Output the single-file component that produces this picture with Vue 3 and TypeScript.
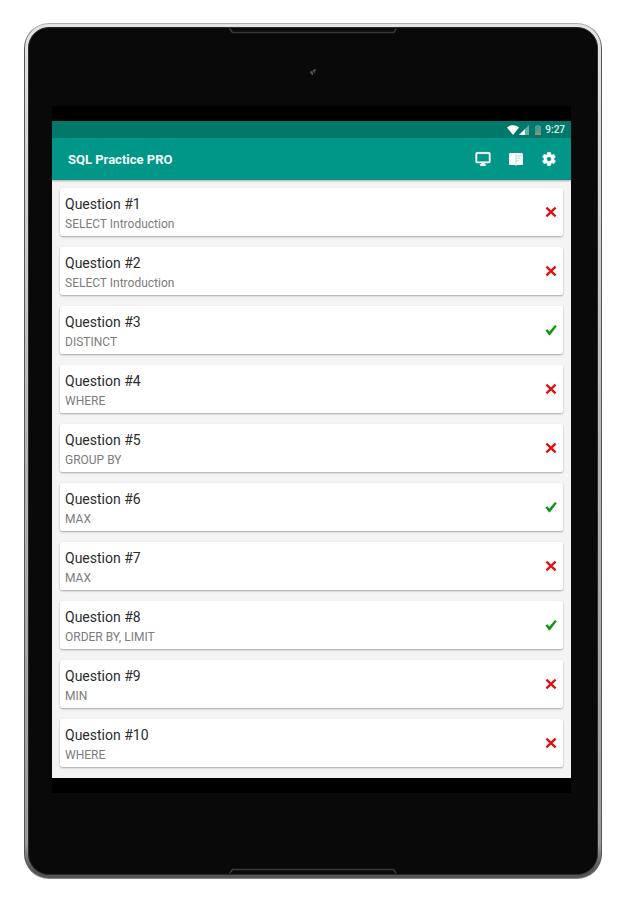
<script setup lang="ts">
interface Question {
  id: number
  topic: string
  solved: boolean
}

const questions: Question[] = [
  { id: 1, topic: 'SELECT Introduction', solved: false },
  { id: 2, topic: 'SELECT Introduction', solved: false },
  { id: 3, topic: 'DISTINCT', solved: true },
  { id: 4, topic: 'WHERE', solved: false },
  { id: 5, topic: 'GROUP BY', solved: false },
  { id: 6, topic: 'MAX', solved: true },
  { id: 7, topic: 'MAX', solved: false },
  { id: 8, topic: 'ORDER BY, LIMIT', solved: true },
  { id: 9, topic: 'MIN', solved: false },
  { id: 10, topic: 'WHERE', solved: false },
]
</script>

<template>
  <div class="page">
    <div class="edge">
      <div class="rim">
        <div class="bezel">
          <div class="forehead">
            <svg class="speaker" viewBox="0 0 168 6" preserveAspectRatio="none" aria-hidden="true">
              <path d="M0.5 0.5 L3.5 4.5 H165 L167 0.5" fill="none" stroke="#383838" stroke-width="1.6" />
            </svg>
            <svg class="camera" viewBox="0 0 8 8" aria-hidden="true">
              <path d="M1.5 3.5 L4 6.5 M4 3.5 L6.5 1.5" stroke="#55555c" stroke-width="2" />
              <path d="M3.5 3.5 H5.5 V5" fill="none" stroke="#45456a" stroke-width="1.2" />
            </svg>
          </div>

          <div class="display">
            <main class="screen">
              <div class="status">
                <svg class="wifi" viewBox="0 0 12 10" aria-hidden="true">
                  <path d="M0 2.6 C3.4 -0.4 8.6 -0.4 12 2.6 L6 10 Z" fill="#fff" />
                </svg>
                <svg class="signal" viewBox="0 0 10 10" aria-hidden="true">
                  <path d="M10 0 V10 H0 Z" fill="#5fb0a6" />
                  <path d="M6 4 V10 H0 Z" fill="#fff" />
                </svg>
                <svg class="battery" viewBox="0 0 8 10" aria-hidden="true">
                  <path d="M2.5 0 H5.5 V1 H7 V10 H1 V1 H2.5 Z" fill="#4d9c91" />
                  <path d="M1 8 H7 V10 H1 Z" fill="#b9836a" />
                </svg>
                <span class="clock">9:27</span>
              </div>

              <header class="appbar">
                <h1>SQL Practice PRO</h1>
                <div class="actions">
                  <button type="button" aria-label="Console">
                    <svg viewBox="0 0 24 24" aria-hidden="true">
                      <path d="M21 2H3c-1.1 0-2 .9-2 2v12c0 1.1.9 2 2 2h7v2H8v2h8v-2h-2v-2h7c1.1 0 2-.9 2-2V4c0-1.1-.9-2-2-2zm0 14H3V4h18v12z" fill="#fff" stroke="#fff" stroke-width="0.8" />
                    </svg>
                  </button>
                  <button type="button" aria-label="Reference">
                    <svg viewBox="0 0 24 24" aria-hidden="true">
                      <path d="M20.5 3H3.5C2.4 3 1.5 3.9 1.5 5v14c0 1.100.9 2 2 2h7l1.500 1.200 1.500-1.200h7c1.100 0 2-.9 2-2V5c0-1.100-.9-2-2-2z" fill="#fff" />
                      <path d="M12 5 V20 M14 7.500 H20 M14 11 H19 M14 14.500 H16.500" stroke="#009688" stroke-width="1" opacity="0.55" />
                    </svg>
                  </button>
                  <button type="button" aria-label="Settings">
                    <svg viewBox="0 0 24 24" aria-hidden="true">
                      <path d="M19.43 12.98c.04-.32.07-.64.07-.98s-.03-.66-.07-.98l2.11-1.65c.19-.15.24-.42.12-.64l-2-3.46c-.12-.22-.39-.3-.61-.22l-2.49 1c-.52-.4-1.08-.73-1.69-.98l-.38-2.65C14.46 2.18 14.25 2 14 2h-4c-.25 0-.46.18-.49.42l-.38 2.65c-.61.25-1.17.59-1.69.98l-2.49-1c-.23-.09-.49 0-.61.22l-2 3.46c-.13.22-.07.49.12.64l2.11 1.65c-.04.32-.07.65-.07.98s.03.66.07.98l-2.11 1.65c-.19.15-.24.42-.12.64l2 3.46c.12.22.39.3.61.22l2.49-1c.52.4 1.08.73 1.69.98l.38 2.65c.03.24.24.42.49.42h4c.25 0 .46-.18.49-.42l.38-2.65c.61-.25 1.17-.59 1.69-.98l2.49 1c.23.09.49 0 .61-.22l2-3.46c.12-.22.07-.49-.12-.64l-2.11-1.65zM12 15.5c-1.93 0-3.5-1.57-3.5-3.5s1.57-3.5 3.5-3.5 3.5 1.57 3.5 3.5-1.57 3.5-3.5 3.5z" fill="#fff" stroke="#fff" stroke-width="0.6" />
                    </svg>
                  </button>
                </div>
              </header>

              <ul class="list">
                <li v-for="q in questions" :key="q.id" class="card">
                  <div class="text">
                    <h2>Question #{{ q.id }}</h2>
                    <p>{{ q.topic }}</p>
                  </div>
                  <svg v-if="q.solved" class="mark" viewBox="0 0 12 12" role="img" aria-label="Solved">
                    <path d="M0.4 6.6 L2.2 5.2 L4.4 7.4 L10 1 L11.8 2.2 L5 11.2 H4 Z" fill="#149414" />
                  </svg>
                  <svg v-else class="mark" viewBox="0 0 12 12" role="img" aria-label="Not solved">
                    <path d="M1.400 1.600 L10.600 10.400 M10.600 1.600 L1.400 10.400" stroke="#e01010" stroke-width="2.300" />
                  </svg>
                </li>
              </ul>
            </main>
          </div>

          <div class="chin">
            <svg class="speaker" viewBox="0 0 168 6" preserveAspectRatio="none" aria-hidden="true">
              <path d="M0.5 5.5 L3.5 1.5 H165 L167 5.5" fill="none" stroke="#383838" stroke-width="1.6" />
            </svg>
          </div>
        </div>
      </div>
    </div>
  </div>
</template>

<style>
body {
  background: #fff;
}
</style>

<style scoped>
.page {
  box-sizing: border-box;
  padding: 23px 24px;
  font-family: Roboto, "Liberation Sans", sans-serif;
}

.edge {
  padding: 1px;
  border-radius: 25px;
  background: linear-gradient(to bottom, #b0b0b0, #555 3%, #555 98%, #888);
}

.rim {
  padding: 3px;
  border-radius: 24px;
  background: linear-gradient(to bottom, #e4e4e4, #b4b4b4 50%, #999 96%, #555 99%);
}

.bezel {
  display: flex;
  flex-direction: column;
  border: 1px solid #2a2a2a;
  border-radius: 21px;
  background: #090909;
}

.forehead,
.chin {
  display: flex;
  flex-direction: column;
  align-items: center;
}

.forehead {
  height: 78px;
  gap: 34px;
}

.chin {
  height: 81px;
  justify-content: flex-end;
}

.speaker {
  width: 168px;
  height: 6px;
}

.camera {
  width: 8px;
  height: 8px;
}

.display {
  margin: 0 26px 0 23px;
  padding: 15px 0;
  background: #000;
}

.screen {
  background: #f4f4f4;
}

.status {
  display: flex;
  align-items: center;
  justify-content: flex-end;
  height: 17px;
  padding-right: 6px;
  background: #00796b;
}

.wifi {
  width: 12px;
  height: 10px;
}

.signal {
  width: 10px;
  height: 10px;
}

.battery {
  width: 8px;
  height: 10px;
  margin: 0 3px 0 5px;
}

.clock {
  color: #e0f0ee;
  font-size: 10px;
  font-weight: 500;
  line-height: 17px;
}

.appbar {
  display: flex;
  align-items: center;
  justify-content: space-between;
  height: 42px;
  padding: 0 13px 0 16px;
  background: #009688;
  box-shadow: 0 1px 2px rgba(0, 0, 0, 0.3);
}

.appbar h1 {
  margin: 0;
  padding-top: 2px;
  color: #f2fbfa;
  font-size: 13px;
  font-weight: 700;
  line-height: 18px;
}

.actions {
  display: flex;
  gap: 15px;
}

.actions button {
  display: block;
  width: 18px;
  height: 18px;
  padding: 1px;
  border: 0;
  background: none;
  cursor: pointer;
}

.actions svg {
  display: block;
  width: 16px;
  height: 16px;
}

.list {
  display: flex;
  flex-direction: column;
  gap: 11px;
  margin: 0;
  padding: 8px 8px 11px;
  list-style: none;
}

.card {
  display: flex;
  align-items: center;
  justify-content: space-between;
  height: 48px;
  padding: 0 6px 0 5px;
  border-radius: 2px;
  background: #fff;
  box-shadow: 0 1px 2px rgba(0, 0, 0, 0.32);
}

.text {
  padding-top: 4px;
}

.card h2,
.card p {
  margin: 0;
  font-weight: 400;
  line-height: 20px;
}

.card h2 {
  color: #2c2c2c;
  font-size: 14px;
}

.card p {
  color: #7c7c7c;
  font-size: 12px;
}

.mark {
  width: 12px;
  height: 12px;
}
</style>
